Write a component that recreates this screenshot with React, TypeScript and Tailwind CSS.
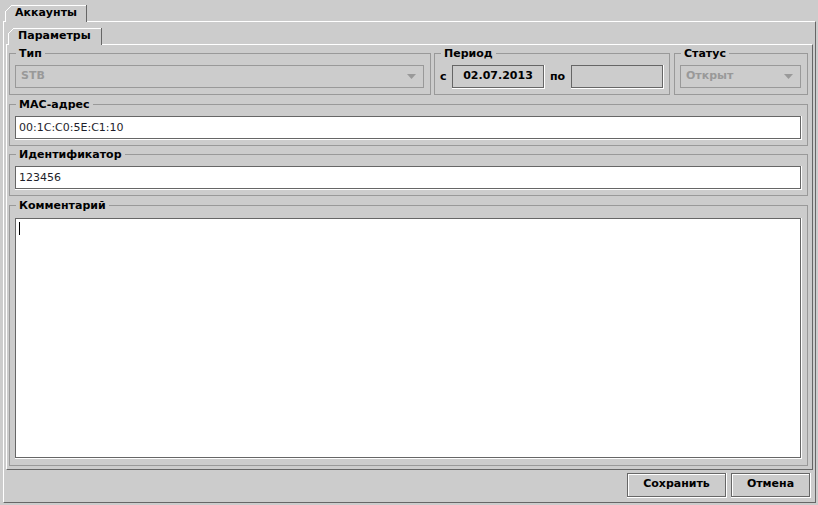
import React from "react";

function Group({
  title,
  className,
  children,
}: {
  title: string;
  className: string;
  children: React.ReactNode;
}) {
  return (
    <fieldset className={`min-w-0 border border-[#999999] px-[5px] pb-[5px] ${className}`}>
      <legend className="ml-[1px] px-[3px] text-[11px] font-bold leading-[15px] text-black">{title}</legend>
      {children}
    </fieldset>
  );
}

function TextField({ value }: { value: string }) {
  return (
    <div className="h-[24px] border-r border-b border-white">
      <div className="flex h-full items-center border border-[#666666] bg-white pl-[3px] pt-[1px] text-[11px] text-[#1e1e2a]">
        {value}
      </div>
    </div>
  );
}

function Combo({ value }: { value: string }) {
  return (
    <div className="h-[24px] border-r border-b border-transparent">
      <div className="flex h-full items-center justify-between border border-[#999999] bg-[#cccccc] pl-[5px] pr-[7px] text-[11px] font-bold text-[#999999]">
        <span>{value}</span>
        <svg width="9" height="5" viewBox="0 0 9 5" className="block">
          <polygon points="0,0 9,0 4.5,5" fill="#999999" />
        </svg>
      </div>
    </div>
  );
}

function DateField({ value }: { value: string }) {
  return (
    <div className="h-[24px] w-[93px] border-r border-b border-white">
      <div className="flex h-full items-center justify-center border border-[#666666] bg-[#cccccc] text-[11px] font-bold text-black">
        {value}
      </div>
    </div>
  );
}

function Button({ label, width }: { label: string; width: string }) {
  return (
    <div className={`h-[25px] border-r border-b border-white ${width}`}>
      <div className="flex h-full items-center justify-center border border-[#666666] pb-[1px] text-[11px] font-bold text-black shadow-[inset_1px_1px_0_#ffffff]">
        {label}
      </div>
    </div>
  );
}

function Tab({ label, width, slant }: { label: string; width: number; slant: number }) {
  return (
    <div className="relative z-10 -mb-px h-[17px] bg-[#cccccc]" style={{ width }}>
      <svg
        className="absolute inset-0"
        width={width}
        height={17}
        viewBox={`0 0 ${width} 17`}
        shapeRendering="crispEdges"
      >
        <polyline
          points={`0.5,17 0.5,${slant + 0.5} ${slant + 0.5},0.5 ${width - 1},0.5`}
          fill="none"
          stroke="#ffffff"
          strokeWidth="1"
        />
        <line x1={width - 0.5} y1="0" x2={width - 0.5} y2="17" stroke="#666666" strokeWidth="1" />
      </svg>
      <span className="relative block pl-[10px] text-[11px] font-bold leading-[15px] text-black">{label}</span>
    </div>
  );
}

export default function App() {
  return (
    <div className="flex h-[505px] w-[818px] flex-col bg-[#cccccc] pl-[3px] pt-[5px] font-['DejaVu_Sans',sans-serif]">
      <div className="ml-[2px]">
        <Tab label="Аккаунты" width={82} slant={6} />
      </div>
      <div className="flex h-[482px] w-[813px] flex-col border-t border-l border-white border-r-[#666666] border-b-[#666666] border-r border-b pt-[6px]">
        <div className="ml-[4px]">
          <Tab label="Параметры" width={94} slant={5} />
        </div>
        <div className="ml-[2px] flex h-[426px] w-[807px] flex-col border-t border-l border-white border-r border-b border-r-[#666666] border-b-[#666666] pt-[1px] pr-[4px] pb-[3px] pl-[2px]">
          <div className="flex h-[49px]">
            <Group title="Тип" className="h-[49px] w-[422px] pt-[4px]">
              <Combo value="STB" />
            </Group>
            <Group title="Период" className="ml-[3px] h-[49px] w-[236px] pt-[4px]">
              <div className="flex items-center">
                <span className="w-[12px] text-[11px] font-bold text-black">с</span>
                <DateField value="02.07.2013" />
                <span className="w-[26px] pl-[5px] text-[11px] font-bold text-black">по</span>
                <DateField value="" />
              </div>
            </Group>
            <Group title="Статус" className="ml-[4px] h-[49px] w-[134px] pt-[4px]">
              <Combo value="Открыт" />
            </Group>
          </div>
          <Group title="MAC-адрес" className="mt-[2px] h-[49px] pt-[4px]">
            <TextField value="00:1C:C0:5E:C1:10" />
          </Group>
          <Group title="Идентификатор" className="mt-[1px] h-[49px] pt-[4px]">
            <TextField value="123456" />
          </Group>
          <Group title="Комментарий" className="mt-[2px] h-[268px] pt-[5px] pb-[6px]">
            <div className="h-[241px] border-r border-b border-white">
              <div className="h-full border border-[#666666] bg-white pl-[3px] pt-[3px]">
                <div className="h-[13px] w-px bg-black" />
              </div>
            </div>
          </Group>
        </div>
        <div className="mt-[3px] flex justify-end pr-[4px]">
          <Button label="Сохранить" width="w-[100px]" />
          <div className="ml-[4px]">
            <Button label="Отмена" width="w-[80px]" />
          </div>
        </div>
      </div>
    </div>
  );
}
